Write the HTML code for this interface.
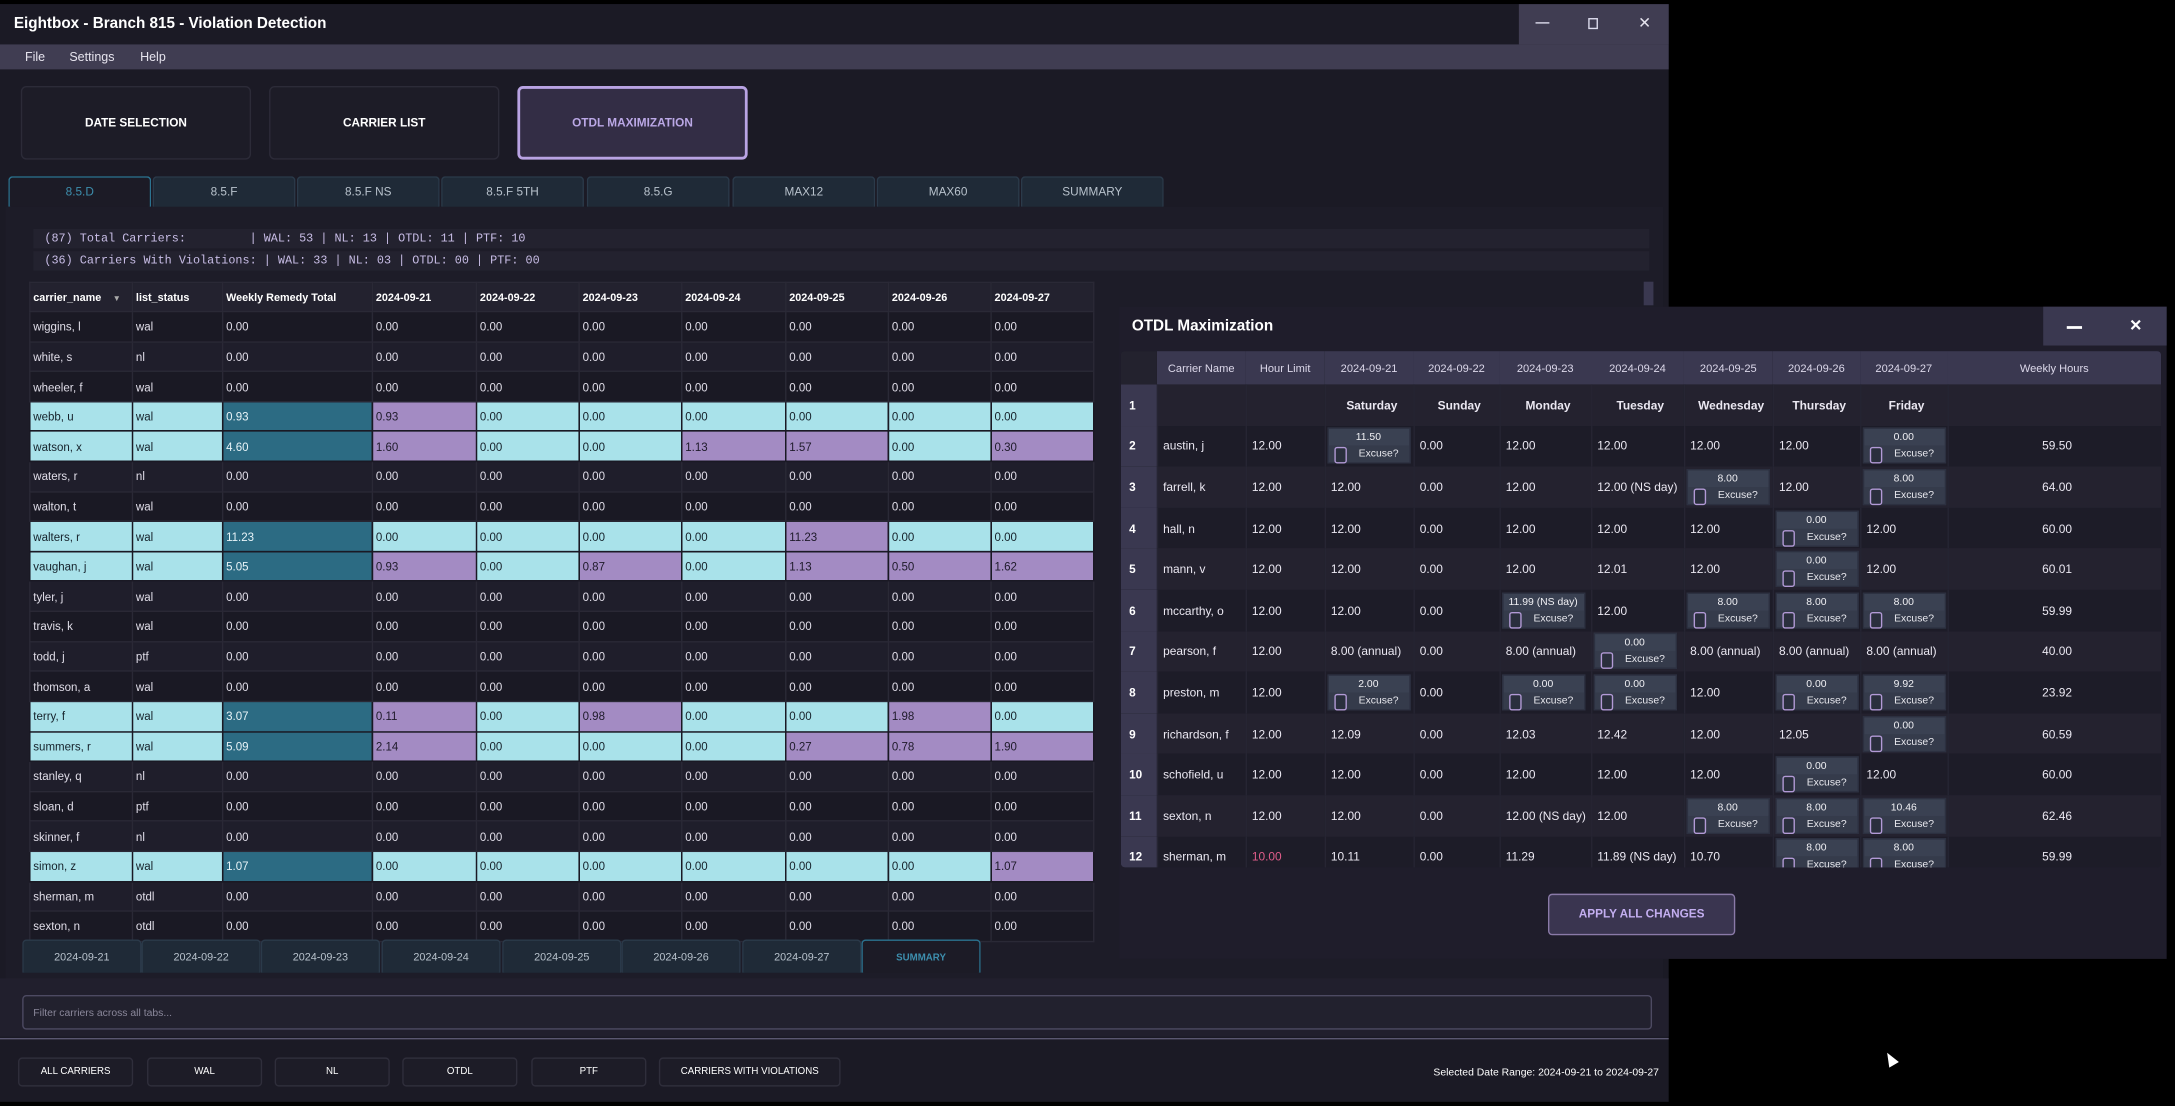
<!DOCTYPE html>
<html><head><meta charset="utf-8">
<style>
*{box-sizing:border-box;margin:0;padding:0}
html,body{width:2175px;height:1106px;overflow:hidden;background:#000}
#s{position:absolute;left:0;top:0;width:1568px;height:797px;transform:scale(1.3871,1.3877);transform-origin:0 0;font-family:"Liberation Sans Narrow","Liberation Sans",sans-serif;color:#e6e4ee}
.a{position:absolute}
.win{left:0;top:3px;width:1203px;height:791px;background:#1b1a25}
.title{left:0;top:0;width:1203px;height:29px;background:#1b1a25}
.title b{position:absolute;left:10px;top:8px;font-size:11px;font-family:"Liberation Sans",sans-serif;color:#fff}
.ctl{left:1095px;top:0;width:108px;height:29px;background:#403d52;font-size:11px}
.menu{left:0;top:29px;width:1203px;height:18px;background:#403d52;font-size:9px}
.menu span{position:absolute;top:4px}
.bb{top:59px;height:53px;width:166px;border:1px solid #2c2b38;border-radius:4px;background:#1d1c27;font:bold 8.5px "Liberation Sans",sans-serif;color:#fff;text-align:center;line-height:51px}
.tab{top:124px;height:22px;width:103px;background:#1f2a37;border:1px solid #2b3a4a;border-bottom:none;border-radius:3px 3px 0 0;font-size:8.5px;color:#b8c2cc;text-align:center;line-height:21px}
.stat{left:24px;width:1165px;height:14px;background:#23222f;font:8.5px "Liberation Mono",monospace;color:#c8bde6;padding-left:8px;line-height:14px;white-space:pre}
table{border-collapse:collapse;table-layout:fixed}
#mt{position:absolute;left:21px;top:200px;width:767px;font-size:8.3px}
#mt td,#mt th{border:1px solid #2a2936;padding-left:2px;text-align:left;white-space:nowrap;overflow:hidden}
#mt th{height:21px;background:#23222f;font-weight:bold;color:#fff;font-family:"Liberation Sans",sans-serif;font-size:7.8px}
#mt td{height:21.62px;color:#e0dde8}
#mt tr:nth-child(odd) td{background:#1f1e2b}
#mt tr:nth-child(even) td{background:#1a1924}
#mt tr.h td{background:#a9e2ea;color:#15212a;border-color:#1a1924}
#mt tr.h td.w{background:#2c6b83;color:#e8f4f8}
#mt tr.h td.v{background:#a38bc3;color:#1e1a2a}
.dt{top:674px;height:24px;width:86px;background:#1f2a37;border:1px solid #2b3a4a;border-bottom:none;border-radius:3px 3px 0 0;font-size:7.8px;color:#b8c2cc;text-align:center;line-height:23px}
.fb{top:759px;height:21px;border:1px solid #2f2e3b;border-radius:3px;background:#1d1c27;font:7px "Liberation Sans",sans-serif;color:#fff;text-align:center;line-height:19px}
.ow{left:807px;top:221px;width:755px;height:470px;background:#1f1d2b}
#ot{position:absolute;left:0;top:0;width:750px;font-size:8.6px}
#ot td,#ot th{white-space:nowrap;text-align:left;padding-left:4px;overflow:hidden}
#ot th{height:24px;background:#3a3850;font-weight:normal;color:#dcd8ea;font-size:8px;text-align:center;padding:0}
#ot th.n{background:#23222e}
#ot td{height:29.6px;color:#ebe8f2;border-right:1px solid #262533}
#ot tr:nth-child(even) td{background:#24222f}
#ot tr:nth-child(odd) td{background:#1d1c28}
#ot td.n{background:#3a3850!important;color:#fff;font-weight:bold;padding-left:6px;font-size:8.5px}
#ot td.c{text-align:center}
.ex{display:inline-block;width:60px;height:26px;background:#3a4152;border:1px solid #2c3040;vertical-align:middle;margin-left:-3px;font-size:7.5px}
.ex i{display:block;height:12px;text-align:center;font-style:normal;line-height:12px;color:#f0f0f4}
.ex u{display:block;height:12px;text-decoration:none;position:relative;background:#353b4b;padding-left:22px;line-height:12px;color:#e8e8ee}
.ex u:before{content:"";position:absolute;left:4px;top:1px;width:7px;height:10px;border:1px solid #b29ad6;border-radius:2px;background:#2a2f3d}
.pk{color:#e05d8a!important}
</style></head><body><div id="s">
<div class="a win">
 <div class="a title"><b>Eightbox - Branch 815 - Violation Detection</b></div>
 <div class="a ctl"><span class="a" style="left:12px;top:13px;width:10px;height:1px;background:#dde"></span><span class="a" style="left:50px;top:10px;width:7px;height:8px;border:1px solid #dde"></span><span class="a" style="left:86px;top:7px;font-size:11px">✕</span></div>
 <div class="a menu"><span style="left:18px">File</span><span style="left:50px">Settings</span><span style="left:101px">Help</span></div>
 <div class="a bb" style="left:15px">DATE SELECTION</div>
 <div class="a bb" style="left:194px">CARRIER LIST</div>
 <div class="a bb" style="left:373px;background:#332d45;border:2px solid #b9a3e3;color:#bba8e6;line-height:49px">OTDL MAXIMIZATION</div>
 <div class="a" style="left:4px;top:146px;width:1195px;height:557px;background:#1d1c28"></div>
 <div class="a tab" style="left:6px;background:#1c1b26;border:1px solid #2b7390;border-bottom:none;color:#3d8fae">8.5.D</div>
 <div class="a tab" style="left:110px">8.5.F</div>
 <div class="a tab" style="left:214px">8.5.F NS</div>
 <div class="a tab" style="left:318px">8.5.F 5TH</div>
 <div class="a tab" style="left:423px">8.5.G</div>
 <div class="a tab" style="left:528px">MAX12</div>
 <div class="a tab" style="left:632px">MAX60</div>
 <div class="a tab" style="left:736px">SUMMARY</div>
 <div class="a stat" style="top:162px">(87) Total Carriers:         | WAL: 53 | NL: 13 | OTDL: 11 | PTF: 10</div>
 <div class="a stat" style="top:178px">(36) Carriers With Violations: | WAL: 33 | NL: 03 | OTDL: 00 | PTF: 00</div>
 <div class="a" style="left:1185px;top:200px;width:7px;height:17px;background:#3a3850"></div>
 <table id="mt"><colgroup><col style="width:74px"><col style="width:65px"><col style="width:108px"><col style="width:75px"><col style="width:74px"><col style="width:74px"><col style="width:75px"><col style="width:74px"><col style="width:74px"><col style="width:74px"></colgroup>
 <tr><th>carrier_name <span style="color:#aaa;font-size:6px;margin-left:6px">▼</span></th><th>list_status</th><th>Weekly Remedy Total</th><th>2024-09-21</th><th>2024-09-22</th><th>2024-09-23</th><th>2024-09-24</th><th>2024-09-25</th><th>2024-09-26</th><th>2024-09-27</th></tr>
 <tr><td>wiggins, l</td><td>wal</td><td>0.00</td><td>0.00</td><td>0.00</td><td>0.00</td><td>0.00</td><td>0.00</td><td>0.00</td><td>0.00</td></tr>
 <tr><td>white, s</td><td>nl</td><td>0.00</td><td>0.00</td><td>0.00</td><td>0.00</td><td>0.00</td><td>0.00</td><td>0.00</td><td>0.00</td></tr>
 <tr><td>wheeler, f</td><td>wal</td><td>0.00</td><td>0.00</td><td>0.00</td><td>0.00</td><td>0.00</td><td>0.00</td><td>0.00</td><td>0.00</td></tr>
 <tr class="h"><td>webb, u</td><td>wal</td><td class="w">0.93</td><td class="v">0.93</td><td>0.00</td><td>0.00</td><td>0.00</td><td>0.00</td><td>0.00</td><td>0.00</td></tr>
 <tr class="h"><td>watson, x</td><td>wal</td><td class="w">4.60</td><td class="v">1.60</td><td>0.00</td><td>0.00</td><td class="v">1.13</td><td class="v">1.57</td><td>0.00</td><td class="v">0.30</td></tr>
 <tr><td>waters, r</td><td>nl</td><td>0.00</td><td>0.00</td><td>0.00</td><td>0.00</td><td>0.00</td><td>0.00</td><td>0.00</td><td>0.00</td></tr>
 <tr><td>walton, t</td><td>wal</td><td>0.00</td><td>0.00</td><td>0.00</td><td>0.00</td><td>0.00</td><td>0.00</td><td>0.00</td><td>0.00</td></tr>
 <tr class="h"><td>walters, r</td><td>wal</td><td class="w">11.23</td><td>0.00</td><td>0.00</td><td>0.00</td><td>0.00</td><td class="v">11.23</td><td>0.00</td><td>0.00</td></tr>
 <tr class="h"><td>vaughan, j</td><td>wal</td><td class="w">5.05</td><td class="v">0.93</td><td>0.00</td><td class="v">0.87</td><td>0.00</td><td class="v">1.13</td><td class="v">0.50</td><td class="v">1.62</td></tr>
 <tr><td>tyler, j</td><td>wal</td><td>0.00</td><td>0.00</td><td>0.00</td><td>0.00</td><td>0.00</td><td>0.00</td><td>0.00</td><td>0.00</td></tr>
 <tr><td>travis, k</td><td>wal</td><td>0.00</td><td>0.00</td><td>0.00</td><td>0.00</td><td>0.00</td><td>0.00</td><td>0.00</td><td>0.00</td></tr>
 <tr><td>todd, j</td><td>ptf</td><td>0.00</td><td>0.00</td><td>0.00</td><td>0.00</td><td>0.00</td><td>0.00</td><td>0.00</td><td>0.00</td></tr>
 <tr><td>thomson, a</td><td>wal</td><td>0.00</td><td>0.00</td><td>0.00</td><td>0.00</td><td>0.00</td><td>0.00</td><td>0.00</td><td>0.00</td></tr>
 <tr class="h"><td>terry, f</td><td>wal</td><td class="w">3.07</td><td class="v">0.11</td><td>0.00</td><td class="v">0.98</td><td>0.00</td><td>0.00</td><td class="v">1.98</td><td>0.00</td></tr>
 <tr class="h"><td>summers, r</td><td>wal</td><td class="w">5.09</td><td class="v">2.14</td><td>0.00</td><td>0.00</td><td>0.00</td><td class="v">0.27</td><td class="v">0.78</td><td class="v">1.90</td></tr>
 <tr><td>stanley, q</td><td>nl</td><td>0.00</td><td>0.00</td><td>0.00</td><td>0.00</td><td>0.00</td><td>0.00</td><td>0.00</td><td>0.00</td></tr>
 <tr><td>sloan, d</td><td>ptf</td><td>0.00</td><td>0.00</td><td>0.00</td><td>0.00</td><td>0.00</td><td>0.00</td><td>0.00</td><td>0.00</td></tr>
 <tr><td>skinner, f</td><td>nl</td><td>0.00</td><td>0.00</td><td>0.00</td><td>0.00</td><td>0.00</td><td>0.00</td><td>0.00</td><td>0.00</td></tr>
 <tr class="h"><td>simon, z</td><td>wal</td><td class="w">1.07</td><td>0.00</td><td>0.00</td><td>0.00</td><td>0.00</td><td>0.00</td><td>0.00</td><td class="v">1.07</td></tr>
 <tr><td>sherman, m</td><td>otdl</td><td>0.00</td><td>0.00</td><td>0.00</td><td>0.00</td><td>0.00</td><td>0.00</td><td>0.00</td><td>0.00</td></tr>
 <tr><td>sexton, n</td><td>otdl</td><td>0.00</td><td>0.00</td><td>0.00</td><td>0.00</td><td>0.00</td><td>0.00</td><td>0.00</td><td>0.00</td></tr>
 </table>
 <div class="a dt" style="left:16px">2024-09-21</div>
 <div class="a dt" style="left:102px">2024-09-22</div>
 <div class="a dt" style="left:188px">2024-09-23</div>
 <div class="a dt" style="left:275px">2024-09-24</div>
 <div class="a dt" style="left:362px">2024-09-25</div>
 <div class="a dt" style="left:448px">2024-09-26</div>
 <div class="a dt" style="left:535px">2024-09-27</div>
 <div class="a dt" style="left:621px;background:#1c1b26;border:1px solid #2b7390;border-bottom:none;color:#3d8fae;font-weight:bold;font-family:'Liberation Sans',sans-serif;font-size:7px;line-height:26px">SUMMARY</div>
 <div class="a" style="left:0;top:702px;width:1203px;height:42px;background:#211f2d"></div>
 <div class="a" style="left:16px;top:714px;width:1175px;height:25px;border:1px solid #4d4a62;border-radius:3px;background:#22212e;font-size:7.5px;color:#8a879a;padding-left:7px;line-height:23px">Filter carriers across all tabs...</div>
 <div class="a" style="left:0;top:745px;width:1203px;height:1px;background:#5a5770"></div>
 <div class="a fb" style="left:13px;width:83px">ALL CARRIERS</div>
 <div class="a fb" style="left:106px;width:83px">WAL</div>
 <div class="a fb" style="left:198px;width:83px">NL</div>
 <div class="a fb" style="left:290px;width:83px">OTDL</div>
 <div class="a fb" style="left:383px;width:83px">PTF</div>
 <div class="a fb" style="left:475px;width:131px">CARRIERS WITH VIOLATIONS</div>
 <div class="a" style="right:7px;top:765px;font-size:7.5px;color:#fff">Selected Date Range: 2024-09-21 to 2024-09-27</div>
</div>

<div class="a ow">
 <div class="a" style="left:9px;top:8px;font:bold 11px 'Liberation Sans',sans-serif;color:#fff">OTDL Maximization</div>
 <div class="a" style="left:666px;top:0;width:89px;height:28px;background:#3a3850;color:#fff"><span class="a" style="left:17px;top:14px;width:11px;height:1.5px;background:#fff"></span><span class="a" style="left:62px;top:7px;font-size:11px;font-weight:bold">✕</span></div>
 <div class="a" style="left:1px;top:32px;width:750px;height:372px;overflow:hidden;background:#1d1c28;border-radius:3px">
 <table id="ot"><colgroup><col style="width:26px"><col style="width:64px"><col style="width:57px"><col style="width:64px"><col style="width:62px"><col style="width:66px"><col style="width:67px"><col style="width:64px"><col style="width:63px"><col style="width:63px"><col style="width:154px"></colgroup>
 <tr><th class="n"></th><th>Carrier Name</th><th>Hour Limit</th><th>2024-09-21</th><th>2024-09-22</th><th>2024-09-23</th><th>2024-09-24</th><th>2024-09-25</th><th>2024-09-26</th><th>2024-09-27</th><th>Weekly Hours</th></tr>
 <tr><td class="n">1</td><td></td><td></td><td class="c" style="font-weight:bold">Saturday</td><td class="c" style="font-weight:bold">Sunday</td><td class="c" style="font-weight:bold">Monday</td><td class="c" style="font-weight:bold">Tuesday</td><td class="c" style="font-weight:bold">Wednesday</td><td class="c" style="font-weight:bold">Thursday</td><td class="c" style="font-weight:bold">Friday</td><td></td></tr>
 <tr><td class="n">2</td><td>austin, j</td><td>12.00</td><td><span class="ex"><i>11.50</i><u>Excuse?</u></span></td><td>0.00</td><td>12.00</td><td>12.00</td><td>12.00</td><td>12.00</td><td><span class="ex"><i>0.00</i><u>Excuse?</u></span></td><td class="c">59.50</td></tr>
 <tr><td class="n">3</td><td>farrell, k</td><td>12.00</td><td>12.00</td><td>0.00</td><td>12.00</td><td>12.00 (NS day)</td><td><span class="ex"><i>8.00</i><u>Excuse?</u></span></td><td>12.00</td><td><span class="ex"><i>8.00</i><u>Excuse?</u></span></td><td class="c">64.00</td></tr>
 <tr><td class="n">4</td><td>hall, n</td><td>12.00</td><td>12.00</td><td>0.00</td><td>12.00</td><td>12.00</td><td>12.00</td><td><span class="ex"><i>0.00</i><u>Excuse?</u></span></td><td>12.00</td><td class="c">60.00</td></tr>
 <tr><td class="n">5</td><td>mann, v</td><td>12.00</td><td>12.00</td><td>0.00</td><td>12.00</td><td>12.01</td><td>12.00</td><td><span class="ex"><i>0.00</i><u>Excuse?</u></span></td><td>12.00</td><td class="c">60.01</td></tr>
 <tr><td class="n">6</td><td>mccarthy, o</td><td>12.00</td><td>12.00</td><td>0.00</td><td><span class="ex"><i>11.99 (NS day)</i><u>Excuse?</u></span></td><td>12.00</td><td><span class="ex"><i>8.00</i><u>Excuse?</u></span></td><td><span class="ex"><i>8.00</i><u>Excuse?</u></span></td><td><span class="ex"><i>8.00</i><u>Excuse?</u></span></td><td class="c">59.99</td></tr>
 <tr><td class="n">7</td><td>pearson, f</td><td>12.00</td><td>8.00 (annual)</td><td>0.00</td><td>8.00 (annual)</td><td><span class="ex"><i>0.00</i><u>Excuse?</u></span></td><td>8.00 (annual)</td><td>8.00 (annual)</td><td>8.00 (annual)</td><td class="c">40.00</td></tr>
 <tr><td class="n">8</td><td>preston, m</td><td>12.00</td><td><span class="ex"><i>2.00</i><u>Excuse?</u></span></td><td>0.00</td><td><span class="ex"><i>0.00</i><u>Excuse?</u></span></td><td><span class="ex"><i>0.00</i><u>Excuse?</u></span></td><td>12.00</td><td><span class="ex"><i>0.00</i><u>Excuse?</u></span></td><td><span class="ex"><i>9.92</i><u>Excuse?</u></span></td><td class="c">23.92</td></tr>
 <tr><td class="n">9</td><td>richardson, f</td><td>12.00</td><td>12.09</td><td>0.00</td><td>12.03</td><td>12.42</td><td>12.00</td><td>12.05</td><td><span class="ex"><i>0.00</i><u>Excuse?</u></span></td><td class="c">60.59</td></tr>
 <tr><td class="n">10</td><td>schofield, u</td><td>12.00</td><td>12.00</td><td>0.00</td><td>12.00</td><td>12.00</td><td>12.00</td><td><span class="ex"><i>0.00</i><u>Excuse?</u></span></td><td>12.00</td><td class="c">60.00</td></tr>
 <tr><td class="n">11</td><td>sexton, n</td><td>12.00</td><td>12.00</td><td>0.00</td><td>12.00 (NS day)</td><td>12.00</td><td><span class="ex"><i>8.00</i><u>Excuse?</u></span></td><td><span class="ex"><i>8.00</i><u>Excuse?</u></span></td><td><span class="ex"><i>10.46</i><u>Excuse?</u></span></td><td class="c">62.46</td></tr>
 <tr><td class="n">12</td><td>sherman, m</td><td class="pk">10.00</td><td>10.11</td><td>0.00</td><td>11.29</td><td>11.89 (NS day)</td><td>10.70</td><td><span class="ex"><i>8.00</i><u>Excuse?</u></span></td><td><span class="ex"><i>8.00</i><u>Excuse?</u></span></td><td class="c">59.99</td></tr>
 </table></div>
 <div class="a" style="left:309px;top:423px;width:135px;height:30px;background:#3a3550;border:1.5px solid #8a7aa8;border-radius:3px;font:bold 8.5px 'Liberation Sans',sans-serif;color:#c3aef0;text-align:center;line-height:27px">APPLY ALL CHANGES</div>
</div>
<div class="a" style="left:1359px;top:758px;width:0;height:0;border-left:4px solid transparent;border-right:4px solid transparent;border-bottom:10px solid #fff;transform:rotate(-30deg)"></div>
</div></body></html>
